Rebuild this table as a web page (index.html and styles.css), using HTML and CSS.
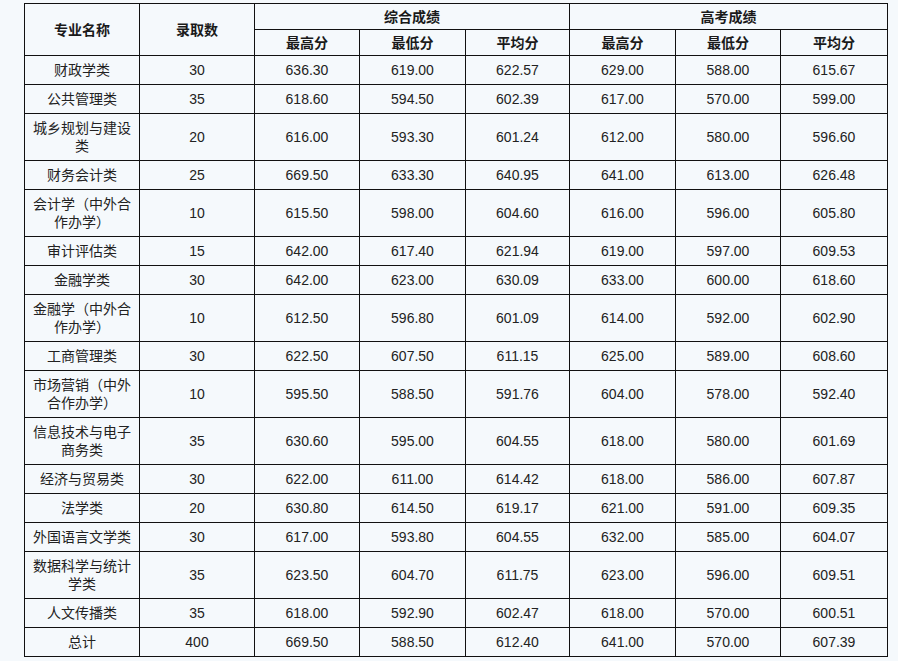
FILE: index.html
```html
<!DOCTYPE html>
<html lang="zh-CN">
<head>
<meta charset="utf-8">
<title>录取成绩</title>
<link rel="stylesheet" href="styles.css">
</head>
<body>
<table class="score-table">
  <colgroup>
    <col class="c-name"><col class="c-num">
    <col class="c-a"><col class="c-b"><col class="c-c">
    <col class="c-d"><col class="c-e"><col class="c-f">
  </colgroup>
  <thead>
    <tr>
      <th rowspan="2">专业名称</th>
      <th rowspan="2">录取数</th>
      <th colspan="3">综合成绩</th>
      <th colspan="3">高考成绩</th>
    </tr>
    <tr>
      <th>最高分</th><th>最低分</th><th>平均分</th>
      <th>最高分</th><th>最低分</th><th>平均分</th>
    </tr>
  </thead>
  <tbody>
    <tr><td>财政学类</td><td>30</td><td>636.30</td><td>619.00</td><td>622.57</td><td>629.00</td><td>588.00</td><td>615.67</td></tr>
    <tr><td>公共管理类</td><td>35</td><td>618.60</td><td>594.50</td><td>602.39</td><td>617.00</td><td>570.00</td><td>599.00</td></tr>
    <tr><td>城乡规划与建设类</td><td>20</td><td>616.00</td><td>593.30</td><td>601.24</td><td>612.00</td><td>580.00</td><td>596.60</td></tr>
    <tr><td>财务会计类</td><td>25</td><td>669.50</td><td>633.30</td><td>640.95</td><td>641.00</td><td>613.00</td><td>626.48</td></tr>
    <tr><td>会计学（中外合作办学）</td><td>10</td><td>615.50</td><td>598.00</td><td>604.60</td><td>616.00</td><td>596.00</td><td>605.80</td></tr>
    <tr><td>审计评估类</td><td>15</td><td>642.00</td><td>617.40</td><td>621.94</td><td>619.00</td><td>597.00</td><td>609.53</td></tr>
    <tr><td>金融学类</td><td>30</td><td>642.00</td><td>623.00</td><td>630.09</td><td>633.00</td><td>600.00</td><td>618.60</td></tr>
    <tr><td>金融学（中外合作办学）</td><td>10</td><td>612.50</td><td>596.80</td><td>601.09</td><td>614.00</td><td>592.00</td><td>602.90</td></tr>
    <tr><td>工商管理类</td><td>30</td><td>622.50</td><td>607.50</td><td>611.15</td><td>625.00</td><td>589.00</td><td>608.60</td></tr>
    <tr><td>市场营销（中外合作办学）</td><td>10</td><td>595.50</td><td>588.50</td><td>591.76</td><td>604.00</td><td>578.00</td><td>592.40</td></tr>
    <tr><td>信息技术与电子商务类</td><td>35</td><td>630.60</td><td>595.00</td><td>604.55</td><td>618.00</td><td>580.00</td><td>601.69</td></tr>
    <tr><td>经济与贸易类</td><td>30</td><td>622.00</td><td>611.00</td><td>614.42</td><td>618.00</td><td>586.00</td><td>607.87</td></tr>
    <tr><td>法学类</td><td>20</td><td>630.80</td><td>614.50</td><td>619.17</td><td>621.00</td><td>591.00</td><td>609.35</td></tr>
    <tr><td>外国语言文学类</td><td>30</td><td>617.00</td><td>593.80</td><td>604.55</td><td>632.00</td><td>585.00</td><td>604.07</td></tr>
    <tr><td>数据科学与统计学类</td><td>35</td><td>623.50</td><td>604.70</td><td>611.75</td><td>623.00</td><td>596.00</td><td>609.51</td></tr>
    <tr><td>人文传播类</td><td>35</td><td>618.00</td><td>592.90</td><td>602.47</td><td>618.00</td><td>570.00</td><td>600.51</td></tr>
    <tr><td>总计</td><td>400</td><td>669.50</td><td>588.50</td><td>612.40</td><td>641.00</td><td>570.00</td><td>607.39</td></tr>
  </tbody>
</table>
</body>
</html>
```
FILE: styles.css
```css
html, body {
  margin: 0;
  padding: 0;
  background: #f5f9fc;
}

body {
  padding: 3px 0 0 24px;
  font-family: "Liberation Sans", "Noto Sans CJK SC", sans-serif;
  font-size: 14px;
  color: #222;
}

.score-table {
  border-collapse: collapse;
  table-layout: fixed;
  width: 864px;
  background: #f5f9fc;
}

.c-name, .c-num { width: 115px; }
.c-a { width: 105px; }
.c-b { width: 106px; }
.c-c { width: 104px; }
.c-d { width: 106px; }
.c-e { width: 105px; }
.c-f { width: 107px; }

.score-table th,
.score-table td {
  border: 1px solid #111;
  text-align: center;
  vertical-align: middle;
  line-height: 18px;
}

.score-table th {
  font-weight: bold;
  padding: 4px 6px 3px;
  color: #1a1a1a;
}

.score-table td {
  padding: 5px 6px;
}
```
